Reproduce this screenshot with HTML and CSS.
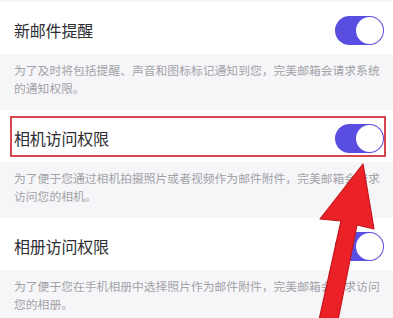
FILE: index.html
```html
<!DOCTYPE html>
<html lang="zh">
<head>
<meta charset="utf-8">
<link rel="stylesheet" href="styles.css">
</head>
<body>
<div class="page">
  <div class="row">
    <span class="title">新邮件提醒</span>
    <span class="toggle"><span class="knob"></span></span>
  </div>
  <div class="desc">为了及时将包括提醒、声音和图标标记通知到您，完美邮箱会请求系统<br>的通知权限。</div>

  <div class="row marked">
    <span class="title">相机访问权限</span>
    <span class="toggle"><span class="knob"></span></span>
    <span class="mark"></span>
  </div>
  <div class="desc">为了便于您通过相机拍摄照片或者视频作为邮件附件，完美邮箱会请求<br>访问您的相机。</div>

  <div class="row">
    <span class="title">相册访问权限</span>
    <span class="toggle"><span class="knob"></span></span>
  </div>
  <div class="desc">为了便于您在手机相册中选择照片作为邮件附件，完美邮箱会请求访问<br>您的相册。</div>

  <svg class="arrow" width="393" height="318" viewBox="0 0 393 318">
    <polygon points="363,164 374,229 357,225 338,320 319,320 341,221 320,219" fill="#ec2128" stroke="#c4161d" stroke-width="1.2" stroke-linejoin="round"/>
  </svg>
</div>
</body>
</html>
```
FILE: styles.css
```css
* { box-sizing: border-box; }
html, body { margin: 0; padding: 0; }
body {
  background: #f6f6f8;
  font-family: "Noto Sans CJK SC", "Noto Sans", sans-serif;
  width: 393px;
  height: 318px;
  overflow: hidden;
}
.page {
  position: relative;
  padding-top: 2px;
}
.row {
  position: relative;
  height: 52px;
  background: #fff;
  display: flex;
  align-items: center;
  justify-content: space-between;
  padding: 4px 9px 0 14px;
}
.title {
  font-size: 16px;
  color: #2e2e33;
  letter-spacing: -0.2px;
}
.toggle {
  width: 49px;
  height: 29px;
  border-radius: 15px;
  background: #5a4ee0;
  display: flex;
  align-items: center;
  justify-content: flex-end;
  padding-right: 1px;
}
.knob {
  width: 27px;
  height: 27px;
  border-radius: 50%;
  background: #fff;
}
.desc {
  padding: 7px 10px 13px 14px;
  font-size: 11.8px;
  line-height: 18px;
  color: #a2a2a8;
  white-space: nowrap;
}
.mark {
  position: absolute;
  left: 10px;
  right: 7px;
  top: 6px;
  bottom: 5px;
  border: 2px solid #d8474d;
}
.arrow {
  position: absolute;
  left: 0;
  top: 0;
}
```
